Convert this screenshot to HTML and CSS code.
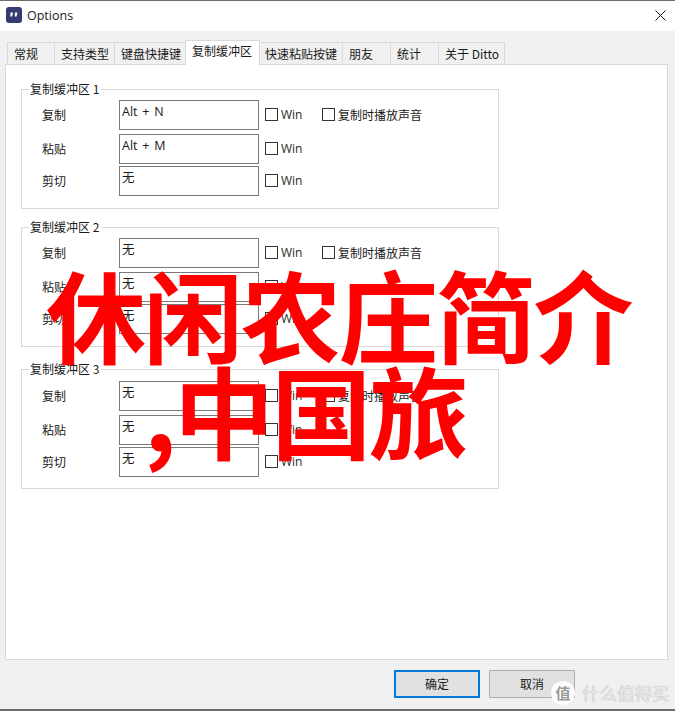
FILE: index.html
```html
<!DOCTYPE html>
<html lang="zh">
<head>
<meta charset="utf-8">
<title>Options</title>
<link rel="stylesheet" href="styles.css">
</head>
<body>
<div class="window">
  <header class="titlebar">
    <svg class="appicon" viewBox="0 0 16 16" aria-hidden="true">
      <rect width="16" height="16" rx="3" fill="#343c72"/>
      <path d="M4.6 5.6h2.5l-1 4H4.3zM9 5.6h2.5l-1 4H8.7z" fill="#fff"/>
    </svg>
    <span class="title">Options</span>
    <svg class="close" viewBox="0 0 11 11" aria-hidden="true">
      <path d="M.5.5l10 10M10.5.5l-10 10" stroke="#111" stroke-width="1" fill="none"/>
    </svg>
  </header>
  <main class="content">
    <nav class="tabs">
      <span class="tab w47">常规</span>
      <span class="tab w60">支持类型</span>
      <span class="tab w71">键盘快捷键</span>
      <span class="tab active">复制缓冲区</span>
      <span class="tab w82">快速粘贴按键</span>
      <span class="tab w48">朋友</span>
      <span class="tab w48">统计</span>
      <span class="tab w67">关于 Ditto</span>
    </nav>
    <section class="panel">
      <div class="group g1">
        <span class="legend">复制缓冲区 1</span>
        <div class="row r1"><span class="label">复制</span><span class="field">Alt + N</span><span class="check"></span><span class="win">Win</span><span class="check second"></span><span class="sound">复制时播放声音</span></div>
        <div class="row r2"><span class="label">粘贴</span><span class="field">Alt + M</span><span class="check"></span><span class="win">Win</span></div>
        <div class="row r3"><span class="label">剪切</span><span class="field">无</span><span class="check"></span><span class="win">Win</span></div>
      </div>
      <div class="group g2">
        <span class="legend">复制缓冲区 2</span>
        <div class="row r1"><span class="label">复制</span><span class="field">无</span><span class="check"></span><span class="win">Win</span><span class="check second"></span><span class="sound">复制时播放声音</span></div>
        <div class="row r2"><span class="label">粘贴</span><span class="field">无</span><span class="check"></span><span class="win">Win</span></div>
        <div class="row r3"><span class="label">剪切</span><span class="field">无</span><span class="check"></span><span class="win">Win</span></div>
      </div>
      <div class="group g3">
        <span class="legend">复制缓冲区 3</span>
        <div class="row r1"><span class="label">复制</span><span class="field">无</span><span class="check"></span><span class="win">Win</span><span class="check second"></span><span class="sound">复制时播放声音</span></div>
        <div class="row r2"><span class="label">粘贴</span><span class="field">无</span><span class="check"></span><span class="win">Win</span></div>
        <div class="row r3"><span class="label">剪切</span><span class="field">无</span><span class="check"></span><span class="win">Win</span></div>
      </div>
    </section>
    <footer class="actions">
      <span class="btn primary">确定</span>
      <span class="btn">取消</span>
    </footer>
  </main>
</div>
<div class="headline">
  <div class="line-one">休闲农庄简介</div>
  <div class="line-two">,中国旅</div>
</div>
<div class="watermark">
  <span class="wm-badge">值</span>
  <span class="wm-text">什么值得买</span>
</div>
</body>
</html>
```
FILE: styles.css
```css
* { box-sizing: border-box; }
html, body { margin: 0; padding: 0; }
body {
  width: 675px;
  height: 711px;
  overflow: hidden;
  position: relative;
  background: #fff;
  font-family: "Noto Sans CJK SC", "Noto Sans", sans-serif;
  font-size: 12px;
  color: #1a1a1a;
}
.window {
  width: 675px;
  height: 711px;
  display: flex;
  flex-direction: column;
  border-top: 1px solid #6e6e6e;
  border-bottom: 2px solid #6e6e6e;
}
.titlebar {
  height: 30px;
  flex: none;
  display: flex;
  align-items: center;
  padding: 0 9px 2px 6px;
  background: #fff;
}
.appicon { width: 16px; height: 16px; flex: none; }
.title {
  margin-left: 5px;
  font-family: "Open Sans", "Noto Sans", sans-serif;
  font-size: 12.5px;
  color: #222;
  flex: 1;
}
.close { width: 11px; height: 11px; flex: none; }
.content {
  flex: 1;
  background: #f0f0f0;
  padding: 9px 7px 0 5px;
  display: flex;
  flex-direction: column;
}
.tabs {
  display: flex;
  align-items: flex-end;
  height: 24px;
  padding-left: 2px;
  position: relative;
  z-index: 1;
}
.tab {
  height: 22px;
  line-height: 21px;
  padding-left: 6px;
  border: 1px solid #d9d9d9;
  border-right-width: 0;
  border-bottom-width: 0;
  background: #f0f0f0;
  white-space: nowrap;
}
.w47 { width: 47px; }
.w60 { width: 60px; }
.w71 { width: 71px; }
.w82 { width: 82px; padding-left: 5px; }
.w48 { width: 48px; }
.w67 { width: 67px; border-right-width: 1px; }
.active {
  width: 75px;
  height: 25px;
  margin-bottom: -1px;
  line-height: 20px;
  background: #fff;
  border-right-width: 1px;
  border-bottom: 0;
}
.active + .tab { border-left-width: 0; }
.panel {
  height: 596px;
  flex: none;
  background: #fff;
  border: 1px solid #d9d9d9;
  padding: 24px 0 0 15px;
}
.group {
  position: relative;
  width: 478px;
  height: 120px;
  border: 1px solid #d9d9d9;
  padding-top: 10px;
}
.g2 { margin-top: 18px; }
.g3 { margin-top: 22px; padding-top: 11px; }
.legend {
  position: absolute;
  left: 7px;
  top: -9px;
  padding: 0 2px 0 1px;
  line-height: 16px;
  background: #fff;
}
.row {
  display: flex;
  align-items: center;
  height: 30px;
  padding-left: 20px;
  line-height: 29px;
}
.r2 { margin-top: 4px; }
.r3 { margin-top: 2px; }
.label { width: 77px; flex: none; height: 30px; }
.field {
  width: 140px;
  height: 30px;
  flex: none;
  border: 1px solid #7a7a7a;
  background: #fff;
  padding: 0 2px;
  line-height: 21px;
  font-size: 12.5px;
  word-spacing: 1.5px;
  font-family: "Open Sans", "Noto Sans CJK SC", sans-serif;
}
.check {
  width: 13px;
  height: 13px;
  flex: none;
  margin: 0 0 1px 6px;
  border: 1px solid #333;
  background: #fff;
}
.win {
  width: 41px;
  height: 30px;
  flex: none;
  margin-left: 3px;
  font-family: "Open Sans", "Noto Sans", sans-serif;
  color: #2b2b2b;
}
.second { margin-left: 0; }
.sound { margin-left: 3px; height: 30px; white-space: nowrap; }
.actions {
  display: flex;
  gap: 9px;
  padding: 10px 0 0 389px;
}
.btn {
  width: 86px;
  height: 28px;
  line-height: 26px;
  text-align: center;
  background: #e1e1e1;
  border: 1px solid #adadad;
}
.primary { border: 2px solid #0078d7; line-height: 24px; }
.headline {
  position: absolute;
  left: 0;
  top: 0;
  width: 675px;
  font-family: "Noto Sans CJK SC", sans-serif;
  font-weight: 700;
  color: #ff0000;
  font-size: 100px;
  letter-spacing: -2.5px;
  line-height: 100px;
  white-space: nowrap;
}
.line-one { position: absolute; left: 46px; top: 263px; }
.line-two { position: absolute; left: 144px; top: 359px; }
.watermark {
  position: absolute;
  left: 551px;
  top: 681px;
  display: flex;
  align-items: center;
  gap: 7px;
  color: rgba(255, 255, 255, .85);
  text-shadow: 0 0 1px #999;
}
.wm-badge {
  width: 24px;
  height: 24px;
  border-radius: 50%;
  background: rgba(255, 255, 255, .9);
  color: #9a9a9a;
  text-align: center;
  line-height: 23px;
  font-size: 15px;
  font-weight: 700;
  text-shadow: none;
}
.wm-text { font-size: 17.5px; line-height: 24px; white-space: nowrap; color: #e8e8e8; }
```
